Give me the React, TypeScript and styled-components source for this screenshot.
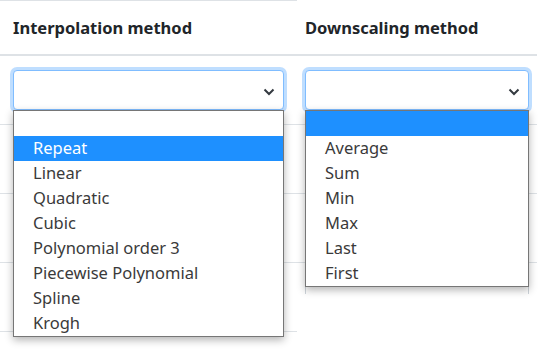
import React from "react";
import styled, { createGlobalStyle } from "styled-components";

const GlobalStyle = createGlobalStyle`
  html, body {
    margin: 0;
    padding: 0;
    background: #fff;
  }
  body {
    font-family: "Noto Sans", "Open Sans", sans-serif;
    color: #212529;
    min-height: 363px;
  }
`;

const Table = styled.table`
  width: 537px;
  border-collapse: collapse;
  table-layout: fixed;
`;

const HeadCell = styled.th<{ $first?: boolean }>`
  height: 53px;
  padding: 0 ${(p) => (p.$first ? "13px" : "8px")};
  text-align: left;
  font-size: 16.5px;
  font-weight: 700;
  border-top: ${(p) => (p.$first ? "1px solid #dee2e6" : "1px solid transparent")};
  border-bottom: 2px solid #dee2e6;
  vertical-align: middle;
`;

const Cell = styled.td<{ $first?: boolean; $open?: boolean }>`
  padding: 14px ${(p) => (p.$first ? "13px" : "8px")} 14px;
  vertical-align: top;
  border-bottom: 1px solid ${(p) => (p.$open ? "transparent" : "#dee2e6")};
`;

const SelectWrap = styled.div`
  position: relative;
`;

const Clip = styled.div<{ $h: number }>`
  height: ${(p) => p.$h}px;
  overflow: hidden;
`;

const SelectBox = styled.div<{ $focused?: boolean }>`
  height: 40px;
  box-sizing: border-box;
  border: 1px solid ${(p) => (p.$focused ? "#80bdff" : "#ced4da")};
  border-radius: 4px;
  background: #fff;
  box-shadow: ${(p) => (p.$focused ? "0 0 0 3px rgba(0, 123, 255, 0.25)" : "none")};
  display: flex;
  align-items: center;
  justify-content: flex-end;
  padding-right: 8px;
`;

const Chevron = styled.svg`
  width: 12px;
  height: 8px;
  margin-top: 3px;
`;

const List = styled.ul`
  position: absolute;
  top: 40px;
  left: 0;
  right: 0;
  z-index: 5;
  margin: 0;
  padding: 0;
  list-style: none;
  background: #fff;
  border: 1px solid #767676;
  box-shadow: 0 3px 8px rgba(0, 0, 0, 0.3);
`;

const Option = styled.li<{ $selected?: boolean }>`
  height: 25px;
  line-height: 23px;
  padding-left: 19px;
  font-size: 16.5px;
  color: ${(p) => (p.$selected ? "#fff" : "#3a3a3a")};
  background: ${(p) => (p.$selected ? "#1e90ff" : "transparent")};
  white-space: nowrap;
`;

const interpolation = [
  "",
  "Repeat",
  "Linear",
  "Quadratic",
  "Cubic",
  "Polynomial order 3",
  "Piecewise Polynomial",
  "Spline",
  "Krogh",
];

const downscaling = ["", "Average", "Sum", "Min", "Max", "Last", "First"];

function Select({
  focused,
  options,
  selected,
}: {
  focused?: boolean;
  options?: string[];
  selected?: number;
}) {
  return (
    <SelectWrap>
      <SelectBox $focused={focused}>
        <Chevron viewBox="0 0 12 8">
          <path d="M1.5 1.5 L6 6 L10.5 1.5" fill="none" stroke="#343a40" strokeWidth="2" />
        </Chevron>
      </SelectBox>
      {options && (
        <List>
          {options.map((o, i) => (
            <Option key={i} $selected={i === selected}>
              {o}
            </Option>
          ))}
        </List>
      )}
    </SelectWrap>
  );
}

export default function App() {
  const rows = [0, 1, 2, 3];
  return (
    <>
      <GlobalStyle />
      <Table>
        <colgroup>
          <col style={{ width: 297 }} />
          <col style={{ width: 240 }} />
        </colgroup>
        <thead>
          <tr>
            <HeadCell $first>Interpolation method</HeadCell>
            <HeadCell>Downscaling method</HeadCell>
          </tr>
        </thead>
        <tbody>
          {rows.map((r) => (
            <tr key={r}>
              <Cell $first>
                {r === 0 ? (
                  <Select focused options={interpolation} selected={1} />
                ) : (
                  <Select />
                )}
              </Cell>
              <Cell $open={r === 3}>
                {r === 0 ? (
                  <Select focused options={downscaling} selected={0} />
                ) : r === 3 ? (
                  <Clip $h={17}>
                    <Select />
                  </Clip>
                ) : (
                  <Select />
                )}
              </Cell>
            </tr>
          ))}
        </tbody>
      </Table>
    </>
  );
}
